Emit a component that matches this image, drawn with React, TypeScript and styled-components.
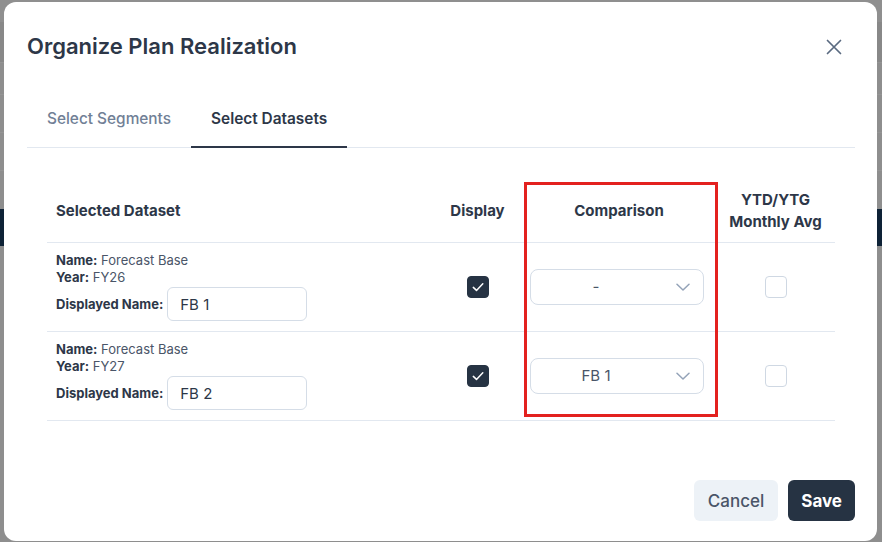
import { useState } from "react";
import styled, { createGlobalStyle } from "styled-components";

const GlobalStyle = createGlobalStyle`
  html, body {
    margin: 0;
    padding: 0;
    height: 100%;
  }
  body {
    font-family: Inter, "Noto Sans", "Liberation Sans", sans-serif;
    background: linear-gradient(
      to bottom,
      #8f8f8f 0px,
      #8f8f8f 22px,
      #888888 22px,
      #888888 62px,
      #9a9a9a 62px,
      #8e8e8e 63px,
      #8e8e8e 94px,
      #9c9c9c 94px,
      #8e8e8e 95px,
      #8e8e8e 132px,
      #9c9c9c 132px,
      #8e8e8e 133px,
      #8e8e8e 170px,
      #9c9c9c 170px,
      #8e8e8e 171px,
      #8e8e8e 209px,
      #0e2236 209px,
      #0e2236 246px,
      #8e8e8e 246px
    );
    overflow: hidden;
  }
  #root {
    height: 100%;
  }
`;

const Backdrop = styled.div`
  height: 100vh;
  display: flex;
  align-items: flex-start;
  justify-content: flex-start;
  padding: 2px 0 0 4px;
  box-sizing: border-box;
`;

const Modal = styled.div`
  width: 873px;
  height: 539px;
  box-sizing: border-box;
  background: #ffffff;
  border-radius: 12px;
  padding: 0 22px 20px 23px;
  display: flex;
  flex-direction: column;
`;

const Header = styled.div`
  display: flex;
  align-items: center;
  justify-content: space-between;
  padding-top: 24px;
  height: 40px;
  box-sizing: content-box;
`;

const Title = styled.h2`
  margin: 0;
  font-size: 22px;
  line-height: 40px;
  font-weight: 600;
  color: #2d3748;
`;

const CloseButton = styled.button`
  all: unset;
  width: 24px;
  height: 24px;
  display: flex;
  align-items: center;
  justify-content: center;
  margin-right: 9px;
  margin-top: 2px;
  color: #5a6a80;
  cursor: pointer;
`;

const TabList = styled.div`
  margin-top: 24px;
  display: flex;
  border-bottom: 1px solid #e2e8f0;
`;

const Tab = styled.button<{ $active?: boolean }>`
  all: unset;
  padding: 18px 20px 16px;
  font-size: 15.4px;
  line-height: 22px;
  font-weight: ${(p) => (p.$active ? 600 : 500)};
  color: ${(p) => (p.$active ? "#2d3748" : "#718096")};
  border-bottom: 2px solid ${(p) => (p.$active ? "#2d3748" : "transparent")};
  margin-bottom: -1px;
  cursor: pointer;
`;

const TableWrap = styled.div`
  position: relative;
  margin: 32px 20px 0;
`;

const Table = styled.table`
  width: 100%;
  border-collapse: collapse;
  table-layout: fixed;
`;

const HeadCell = styled.th<{ $align?: string }>`
  padding: 9px 8px 9px 9px;
  height: 44px;
  text-align: ${(p) => p.$align ?? "center"};
  font-size: 15px;
  line-height: 22px;
  font-weight: 700;
  color: #2d3748;
  border-bottom: 1px solid #e2e8f0;
`;

const Cell = styled.td<{ $align?: string }>`
  padding: 9px 8px 10px 9px;
  text-align: ${(p) => p.$align ?? "center"};
  vertical-align: middle;
  border-bottom: 1px solid #e2e8f0;
`;

const InfoLine = styled.div`
  font-size: 13px;
  line-height: 17px;
  color: #4a5568;
  b {
    font-weight: 700;
    color: #2d3748;
  }
`;

const NameRow = styled.label`
  display: flex;
  align-items: center;
  gap: 4px;
  margin-top: 1px;
  font-size: 13px;
  font-weight: 700;
  color: #2d3748;
`;

const NameInput = styled.input`
  width: 140px;
  height: 34px;
  box-sizing: border-box;
  border: 1px solid #d5dde7;
  border-radius: 6px;
  padding: 0 12px;
  font-family: inherit;
  font-size: 15px;
  color: #2d3748;
  outline: none;
`;

const CheckBox = styled.span<{ $checked?: boolean }>`
  display: inline-flex;
  align-items: center;
  justify-content: center;
  width: 22px;
  height: 22px;
  box-sizing: border-box;
  border-radius: 4px;
  background: ${(p) => (p.$checked ? "#263343" : "#ffffff")};
  border: 1px solid ${(p) => (p.$checked ? "#263343" : "#cfd8e3")};
  vertical-align: middle;
`;

const SelectBox = styled.div`
  width: 174px;
  height: 36px;
  margin-left: -1px;
  box-sizing: border-box;
  border: 1px solid #d5dde7;
  border-radius: 8px;
  display: flex;
  align-items: center;
`;

const SelectValue = styled.span`
  flex: 1;
  text-align: center;
  font-size: 15px;
  color: #4a5568;
`;

const Chevron = styled.span`
  width: 42px;
  display: flex;
  align-items: center;
  justify-content: flex-start;
  padding-left: 15px;
  box-sizing: border-box;
  color: #94a3b8;
`;

const Highlight = styled.div`
  position: absolute;
  left: 477px;
  top: 2px;
  width: 194px;
  height: 235px;
  box-sizing: border-box;
  border: 3px solid #e3211f;
  pointer-events: none;
`;

const Footer = styled.div`
  margin-top: auto;
  display: flex;
  justify-content: flex-end;
  gap: 10px;
`;

const Button = styled.button<{ $primary?: boolean }>`
  all: unset;
  height: 41px;
  padding: 0 ${(p) => (p.$primary ? 13 : 14)}px;
  border-radius: 6px;
  font-size: 17px;
  font-weight: ${(p) => (p.$primary ? 700 : 500)};
  background: ${(p) => (p.$primary ? "#263343" : "#edf2f7")};
  color: ${(p) => (p.$primary ? "#ffffff" : "#4a5568")};
  display: flex;
  align-items: center;
  cursor: pointer;
`;

const CheckIcon = () => (
  <svg width="14" height="14" viewBox="0 0 14 14" fill="none">
    <path
      d="M2.3 7.4 L5.5 10.4 L11.8 3.8"
      stroke="#ffffff"
      strokeWidth="1.5"
      strokeLinecap="round"
      strokeLinejoin="round"
    />
  </svg>
);

const ChevronIcon = () => (
  <svg width="14" height="8" viewBox="0 0 14 8" fill="none">
    <path
      d="M1 1.2 L7 7 L13 1.2"
      stroke="currentColor"
      strokeWidth="1.5"
      strokeLinecap="round"
      strokeLinejoin="round"
    />
  </svg>
);

const CloseIcon = () => (
  <svg width="16" height="16" viewBox="0 0 16 16" fill="none">
    <path
      d="M1.5 1.5 L14.5 14.5 M14.5 1.5 L1.5 14.5"
      stroke="currentColor"
      strokeWidth="1.7"
      strokeLinecap="round"
    />
  </svg>
);

type Dataset = {
  name: string;
  year: string;
  displayName: string;
  display: boolean;
  comparison: string;
  monthlyAvg: boolean;
};

const datasets: Dataset[] = [
  {
    name: "Forecast Base",
    year: "FY26",
    displayName: "FB 1",
    display: true,
    comparison: "-",
    monthlyAvg: false,
  },
  {
    name: "Forecast Base",
    year: "FY27",
    displayName: "FB 2",
    display: true,
    comparison: "FB 1",
    monthlyAvg: false,
  },
];

const App = () => {
  const [tab, setTab] = useState<number>(1);
  const [names, setNames] = useState<string[]>(
    datasets.map((d) => d.displayName)
  );

  return (
    <>
      <GlobalStyle />
      <Backdrop>
        <Modal>
          <Header>
            <Title>Organize Plan Realization</Title>
            <CloseButton type="button" aria-label="Close">
              <CloseIcon />
            </CloseButton>
          </Header>
          <TabList>
            <Tab $active={tab === 0} onClick={() => setTab(0)}>
              Select Segments
            </Tab>
            <Tab $active={tab === 1} onClick={() => setTab(1)}>
              Select Datasets
            </Tab>
          </TabList>
          <TableWrap>
            <Table>
              <colgroup>
                <col style={{ width: 385 }} />
                <col style={{ width: 90 }} />
                <col style={{ width: 193 }} />
                <col style={{ width: 120 }} />
              </colgroup>
              <thead>
                <tr>
                  <HeadCell $align="left">Selected Dataset</HeadCell>
                  <HeadCell>Display</HeadCell>
                  <HeadCell>Comparison</HeadCell>
                  <HeadCell>
                    YTD/YTG
                    <br />
                    Monthly Avg
                  </HeadCell>
                </tr>
              </thead>
              <tbody>
                {datasets.map((d, i) => (
                  <tr key={d.year}>
                    <Cell $align="left">
                      <InfoLine>
                        <b>Name:</b> {d.name}
                      </InfoLine>
                      <InfoLine>
                        <b>Year:</b> {d.year}
                      </InfoLine>
                      <NameRow>
                        Displayed Name:
                        <NameInput
                          value={names[i]}
                          onChange={(e) =>
                            setNames((n) =>
                              n.map((v, j) => (j === i ? e.target.value : v))
                            )
                          }
                        />
                      </NameRow>
                    </Cell>
                    <Cell>
                      <CheckBox $checked={d.display}>
                        {d.display && <CheckIcon />}
                      </CheckBox>
                    </Cell>
                    <Cell>
                      <SelectBox>
                        <SelectValue>{d.comparison}</SelectValue>
                        <Chevron>
                          <ChevronIcon />
                        </Chevron>
                      </SelectBox>
                    </Cell>
                    <Cell>
                      <CheckBox $checked={d.monthlyAvg}>
                        {d.monthlyAvg && <CheckIcon />}
                      </CheckBox>
                    </Cell>
                  </tr>
                ))}
              </tbody>
            </Table>
            <Highlight />
          </TableWrap>
          <Footer>
            <Button type="button">Cancel</Button>
            <Button type="button" $primary>
              Save
            </Button>
          </Footer>
        </Modal>
      </Backdrop>
    </>
  );
};

export default App;
